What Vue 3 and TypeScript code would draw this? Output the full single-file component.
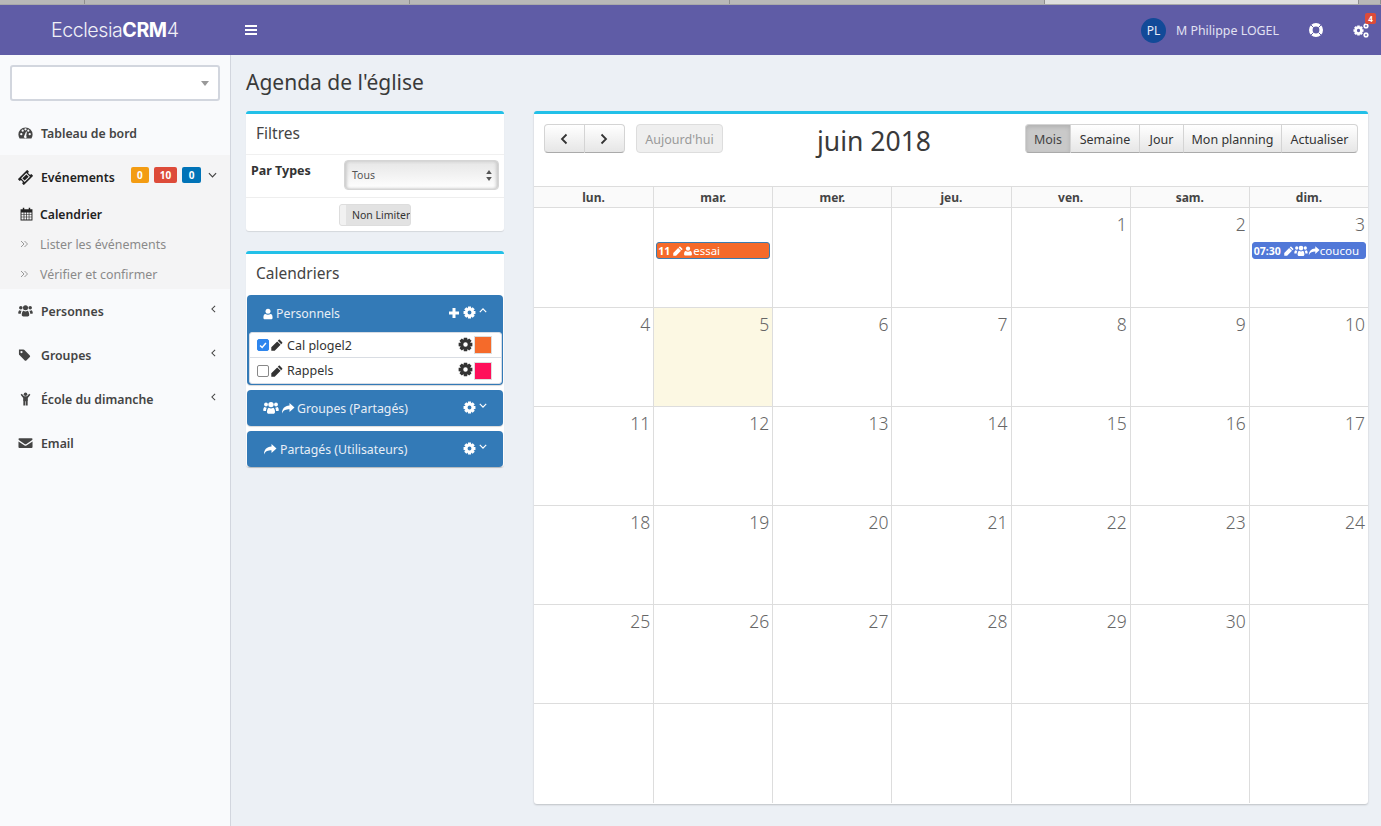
<template>
  <div class="page">
    <div class="tabstrip">
      <div v-for="t in tabs" :key="t" class="tab" :class="{ on: t === 314 }" :style="{ width: t + 'px' }"></div>
    </div>
    <header class="topbar">
      <div class="logo">Ecclesia<b>CRM</b>4</div>
      <svg class="burger" viewBox="0 0 12 10"><path d="M0 0h12v2H0zM0 4h12v2H0zM0 8h12v2H0z" fill="#fff" /></svg>
      <div class="top-right">
        <span class="avatar">PL</span>
        <span class="username">M Philippe LOGEL</span>
        <svg class="lifering" viewBox="0 0 16 16">
          <circle cx="8" cy="8" r="5.200" fill="none" stroke="#fff" stroke-width="3.600" />
          <path d="M2.700 2.700l2.800 2.800M13.300 2.700l-2.800 2.800M2.700 13.300l2.800-2.800M13.300 13.300l-2.800-2.800" stroke="#5f5ca6" stroke-width="1" />
        </svg>
        <span class="cogs">
          <svg viewBox="0 0 16 16" width="16" height="16" fill="#fff">
            <svg x="0" y="3" width="11" height="11" viewBox="0 0 14 14"><path :d="gear" fill-rule="evenodd" /></svg>
            <svg x="10" y="1" width="6" height="6" viewBox="0 0 14 14"><path :d="gear" fill-rule="evenodd" /></svg>
            <svg x="10" y="10" width="6" height="6" viewBox="0 0 14 14"><path :d="gear" fill-rule="evenodd" /></svg>
          </svg>
          <em class="cog-badge">4</em>
        </span>
      </div>
    </header>
    <div class="main">
      <aside class="sidebar">
        <div class="search"><i class="caret"></i></div>
        <nav class="menu">
          <a class="item first">
            <svg class="ic" viewBox="0 0 16 14"><path fill-rule="evenodd" d="M8 1a7.6 7.6 0 0 0-7.6 7.6c0 1.6.5 3 1.300 4.300h12.600c.8-1.300 1.300-2.700 1.300-4.300A7.600 7.600 0 0 0 8 1zM3.500 9.500a1.200 1.200 0 1 1 0-2.400 1.200 1.200 0 0 1 0 2.400zM5 5.700a1.200 1.200 0 1 1 0-2.400 1.200 1.200 0 0 1 0 2.400zM8 4.200A1.200 1.200 0 1 1 8 1.800a1.200 1.200 0 0 1 0 2.400zM9.300 11a1.500 1.500 0 1 1-2.700-.9l2-4.800.9.300-.8 4.900c.4.100.6.300.6.500zM11 5.700a1.200 1.200 0 1 1 0-2.400 1.200 1.200 0 0 1 0 2.400zM12.500 9.500a1.200 1.200 0 1 1 0-2.400 1.200 1.200 0 0 1 0 2.400z" /></svg>
            <span>Tableau de bord</span>
          </a>
          <div class="open-group">
            <a class="item open">
              <svg class="ic ticket" viewBox="0 0 16 16">
                <g transform="rotate(-45 8 8)">
                  <path fill-rule="evenodd" d="M1 3.500h14v2.600a1.900 1.900 0 0 0 0 3.800v2.600H1V9.900a1.900 1.900 0 0 0 0-3.800zM4 5.300v5.400h8V5.300z" />
                  <path d="M5 6.300h6v3.400H5z" />
                </g>
              </svg>
              <span>Evénements</span>
              <span class="badges">
                <em class="amber">0</em><em class="red">10</em><em class="blue">0</em>
              </span>
              <svg class="chev down" viewBox="0 0 10 6"><path d="M1 1l4 4 4-4" /></svg>
            </a>
            <a class="sub active">
              <svg class="cal" viewBox="0 0 14 15"><path fill-rule="evenodd" d="M.6 2.500H3V.8h1.600v1.700h4.800V.8H11v1.700h2.400v12H.6zM1.600 5.800v1.900h2.300V5.800zm3.100 0v1.900h2v-1.900zm2.700 0v1.900h2v-1.900zm2.700 0v1.900h2.300V5.800zM1.600 8.400v2h2.300v-2zm3.100 0v2h2v-2zm2.700 0v2h2v-2zm2.700 0v2h2.300v-2zM1.600 11.100v2.400h2.300v-2.400zm3.100 0v2.400h2v-2.400zm2.700 0v2.400h2v-2.400zm2.700 0v2.400h2.300v-2.400z" /></svg>
              <span>Calendrier</span>
            </a>
            <a v-for="s in subItems" :key="s" class="sub">
              <svg class="dbl" viewBox="0 0 9 8"><path d="M1 1l3 3-3 3M4.500 1l3 3-3 3" /></svg>
              <span>{{ s }}</span>
            </a>
          </div>
          <a class="item">
            <svg class="ic" viewBox="0 0 16 14"><circle cx="3" cy="3.500" r="1.900" /><circle cx="13" cy="3.500" r="1.900" /><circle cx="8" cy="3.600" r="2.700" /><path d="M.2 9.500c0-2 .7-3.400 1.600-3.400.6.500 1.300.8 2 .7-.6 1-.8 2-.8 3.200H1c-.5 0-.8-.2-.8-.5zM15.800 9.500c0-2-.7-3.400-1.600-3.400-.6.500-1.300.8-2 .7.600 1 .8 2 .8 3.200H15c.5 0 .8-.2.800-.5zM4 11c0-2.300 1-4.200 2-4.200 1.200 1 2.800 1 4 0 1 0 2 1.900 2 4.200 0 1-.7 1.800-1.700 1.800H5.700C4.700 12.800 4 12 4 11z" /></svg>
            <span>Personnes</span>
            <svg class="chev left" viewBox="0 0 6 10"><path d="M5 1L1 5l4 4" /></svg>
          </a>
          <a class="item">
            <svg class="ic" viewBox="0 0 16 14"><path fill-rule="evenodd" d="M1 1.200h4.700c.5 0 .9.200 1.200.5l5.700 5.700c.5.500.5 1.200 0 1.700l-3.700 3.700c-.5.500-1.200.5-1.700 0L1.500 7.100C1.200 6.800 1 6.400 1 5.900zM3.700 5a1.200 1.200 0 1 0 0-2.400 1.200 1.200 0 0 0 0 2.400z" /></svg>
            <span>Groupes</span>
            <svg class="chev left" viewBox="0 0 6 10"><path d="M5 1L1 5l4 4" /></svg>
          </a>
          <a class="item">
            <svg class="ic" viewBox="0 0 16 14"><circle cx="8" cy="2" r="1.900" /><path d="M2.800 2.400l1.200-.9L6.500 4h3L12 1.500l1.200.9L10.500 6v3H10.300V14H8.300V9.400h-.6V14H5.700V9H5.500V6z" /></svg>
            <span>École du dimanche</span>
            <svg class="chev left" viewBox="0 0 6 10"><path d="M5 1L1 5l4 4" /></svg>
          </a>
          <a class="item">
            <svg class="ic" viewBox="0 0 16 14"><path d="M1.500 1.800h13c.6 0 1 .4 1 1 0 .5-.3.900-.7 1.200L8.600 8.200c-.4.300-.8.300-1.200 0L1.200 4C.800 3.700.5 3.300.5 2.800c0-.6.400-1 1-1zM.5 5.300l6.500 4.300c.6.400 1.400.4 2 0l6.500-4.300V11.200c0 .6-.4 1-1 1h-13c-.6 0-1-.4-1-1z" /></svg>
            <span>Email</span>
          </a>
        </nav>
      </aside>
      <main class="content">
        <h1 class="title">Agenda de l'église</h1>
        <div class="columns">
          <div class="left-col">
            <section class="box filters">
              <h3 class="box-title">Filtres</h3>
              <div class="filter-row">
                <label>Par Types</label>
                <div class="select">
                  <span>Tous</span>
                  <svg viewBox="0 0 6 11" width="6" height="11"><path d="M3 0l2.800 4H.2zM3 11L.2 7h5.600z" fill="#555" /></svg>
                </div>
              </div>
              <div class="toggle-row">
                <div class="toggle"><i></i><span>Non Limiter</span></div>
              </div>
            </section>
            <section class="box cals">
              <h3 class="box-title">Calendriers</h3>
              <div class="panel personal">
                <div class="panel-head">
                  <span class="panel-name">
                    <svg class="pi" viewBox="0 0 12 14"><circle cx="6" cy="3.700" r="3" /><path d="M.5 11.400c0-2.500.7-4.500 2.400-4.500 1.600 1.300 4.600 1.300 6.200 0 1.700 0 2.400 2 2.400 4.500 0 1.200-.8 2-2 2h-7c-1.200 0-2-.8-2-2z" /></svg>
                    Personnels
                  </span>
                  <span class="panel-tools">
                    <svg viewBox="0 0 12 12" width="12" height="12"><path d="M4.500 1h3v3.500H11v3H7.500V11h-3V7.500H1v-3h3.500z" fill="#fff" /></svg>
                    <svg class="gear" viewBox="0 0 14 14"><path :d="gear" fill-rule="evenodd" /></svg>
                    <svg class="tiny" viewBox="0 0 10 6"><path d="M1 5l4-4 4 4" /></svg>
                  </span>
                </div>
                <div class="cal-list">
                  <div v-for="c in personal" :key="c.name" class="cal-row">
                    <span class="check" :class="{ checked: c.on }">
                      <svg v-if="c.on" viewBox="0 0 12 12"><path d="M2.500 6.500l2.500 2.500 4.500-5.500" /></svg>
                    </span>
                    <svg class="pencil" viewBox="0 0 12 12"><path d="M8.800.8l2.400 2.400c.3.300.3.700 0 1L10.200 5.200 6.800 1.800 7.800.8c.3-.3.700-.3 1 0zM6.200 2.400l3.400 3.400L3.700 11.700.3 11.700.3 8.300z" /></svg>
                    <span class="cal-name">{{ c.name }}</span>
                    <svg class="row-gear" viewBox="0 0 14 14"><path :d="gear" fill-rule="evenodd" /></svg>
                    <span class="swatch" :style="{ background: c.color }"></span>
                  </div>
                </div>
              </div>
              <div class="panel">
                <div class="panel-head short">
                  <span class="panel-name">
                    <svg class="pg" viewBox="0 0 16 14"><circle cx="3" cy="3.500" r="1.900" /><circle cx="13" cy="3.500" r="1.900" /><circle cx="8" cy="3.600" r="2.700" /><path d="M.2 9.500c0-2 .7-3.400 1.600-3.400.6.500 1.300.8 2 .7-.6 1-.8 2-.8 3.200H1c-.5 0-.8-.2-.8-.5zM15.800 9.500c0-2-.7-3.400-1.600-3.400-.6.500-1.300.8-2 .7.600 1 .8 2 .8 3.200H15c.5 0 .8-.2.800-.5zM4 11c0-2.300 1-4.200 2-4.200 1.200 1 2.800 1 4 0 1 0 2 1.900 2 4.200 0 1-.7 1.800-1.700 1.800H5.700C4.700 12.800 4 12 4 11z" /></svg>
                    <svg class="ps" viewBox="0 0 14 12"><path :d="share" /></svg>
                    Groupes (Partagés)
                  </span>
                  <span class="panel-tools">
                    <svg class="gear" viewBox="0 0 14 14"><path :d="gear" fill-rule="evenodd" /></svg>
                    <svg class="tiny" viewBox="0 0 10 6"><path d="M1 1l4 4 4-4" /></svg>
                  </span>
                </div>
              </div>
              <div class="panel">
                <div class="panel-head short">
                  <span class="panel-name">
                    <svg class="ps" viewBox="0 0 14 12"><path :d="share" /></svg>
                    Partagés (Utilisateurs)
                  </span>
                  <span class="panel-tools">
                    <svg class="gear" viewBox="0 0 14 14"><path :d="gear" fill-rule="evenodd" /></svg>
                    <svg class="tiny" viewBox="0 0 10 6"><path d="M1 1l4 4 4-4" /></svg>
                  </span>
                </div>
              </div>
            </section>
          </div>
          <section class="box calendar">
            <div class="toolbar">
              <div class="tb-left">
                <div class="btn-group">
                  <button class="btn nav"><svg viewBox="0 0 8 12" width="8" height="12"><path d="M6.500 1.500L2 6l4.500 4.500" /></svg></button>
                  <button class="btn nav"><svg viewBox="0 0 8 12" width="8" height="12"><path d="M1.500 1.500L6 6l-4.500 4.500" /></svg></button>
                </div>
                <button class="btn today">Aujourd'hui</button>
              </div>
              <h2 class="month">juin 2018</h2>
              <div class="btn-group views">
                <button v-for="v in views" :key="v.label" class="btn" :class="{ pressed: v.label === 'Mois' }" :style="{ width: v.width + 'px' }">{{ v.label }}</button>
              </div>
            </div>
            <div class="grid-head">
              <div v-for="d in days" :key="d" class="dow">{{ d }}</div>
            </div>
            <div class="grid">
              <div v-for="(c, i) in cells" :key="i" class="cell" :class="{ today: c === 5 }">
                <span class="num">{{ c }}</span>
                <div v-if="c === 3 || i === 1" class="event" :class="c === 3 ? 'ev-blue' : 'ev-orange'">
                  <b>{{ c === 3 ? '07:30' : '11' }}</b>
                  <svg class="ev-ic" viewBox="0 0 12 12"><path d="M8.800.8l2.400 2.400c.3.300.3.700 0 1L10.200 5.200 6.800 1.800 7.800.8c.3-.3.700-.3 1 0zM6.200 2.400l3.400 3.400L3.700 11.700.3 11.700.3 8.300z" /></svg>
                  <template v-if="c === 3">
                    <svg class="ev-ic wide" viewBox="0 0 16 14"><circle cx="3" cy="3.500" r="1.900" /><circle cx="13" cy="3.500" r="1.900" /><circle cx="8" cy="3.600" r="2.700" /><path d="M.2 9.500c0-2 .7-3.400 1.600-3.400.6.500 1.300.8 2 .7-.6 1-.8 2-.8 3.200H1c-.5 0-.8-.2-.8-.5zM15.800 9.500c0-2-.7-3.400-1.600-3.400-.6.500-1.300.8-2 .7.600 1 .8 2 .8 3.200H15c.5 0 .8-.2.800-.5zM4 11c0-2.300 1-4.200 2-4.200 1.200 1 2.800 1 4 0 1 0 2 1.900 2 4.200 0 1-.7 1.800-1.700 1.800H5.700C4.700 12.800 4 12 4 11z" /></svg>
                    <svg class="ev-ic wide2" viewBox="0 0 14 12"><path :d="share" /></svg>
                    <span>coucou</span>
                  </template>
                  <template v-else>
                    <svg class="ev-ic" viewBox="0 0 12 14"><circle cx="6" cy="3.700" r="3" /><path d="M.5 11.400c0-2.500.7-4.500 2.400-4.500 1.600 1.300 4.600 1.300 6.200 0 1.700 0 2.400 2 2.400 4.500 0 1.200-.8 2-2 2h-7c-1.200 0-2-.8-2-2z" /></svg>
                    <span>essai</span>
                  </template>
                </div>
              </div>
            </div>
          </section>
        </div>
      </main>
    </div>
  </div>
</template>

<script setup lang="ts">
const tabs = [85, 325, 320, 315, 314, 22]

const subItems = ['Lister les événements', 'Vérifier et confirmer']
const views = [
  { label: 'Mois', width: 46 },
  { label: 'Semaine', width: 69 },
  { label: 'Jour', width: 44 },
  { label: 'Mon planning', width: 98 },
  { label: 'Actualiser', width: 76 },
]
const days = ['lun.', 'mar.', 'mer.', 'jeu.', 'ven.', 'sam.', 'dim.']

const personal = [
  { name: 'Cal plogel2', on: true, color: '#f56a2a' },
  { name: 'Rappels', on: false, color: '#ff0f5a' },
]

// June 2018 starts on a Friday, 6 weeks shown
const cells: (number | null)[] = [null, null, null, null]
for (let d = 1; d <= 30; d++) cells.push(d)
while (cells.length < 42) cells.push(null)

const share = 'M8.500 1L13.500 5.500 8.500 10V7.300C5 7.300 2.500 8 1 11.500 1 7 3.500 3.800 8.500 3.600z'

// gear outline built from 8 teeth
const gear = (() => {
  const pts: string[] = []
  for (let i = 0; i < 8; i++) {
    const a = (i * Math.PI) / 4
    const w = 0.3
    const p = [
      [a - w - 0.12, 4.6],
      [a - w + 0.06, 6.6],
      [a + w - 0.06, 6.6],
      [a + w + 0.12, 4.6],
    ]
    for (const [t, r] of p) {
      pts.push(`${(7 + r * Math.cos(t)).toFixed(2)} ${(7 + r * Math.sin(t)).toFixed(2)}`)
    }
  }
  return `M${pts.join('L')}ZM7 4.900a2.100 2.100 0 1 0 0 4.200 2.100 2.100 0 0 0 0-4.200z`
})()
</script>

<style>
html, body {
  margin: 0;
  background: #ecf0f5;
}
</style>

<style scoped>
.page {
  width: 1381px;
  height: 826px;
  overflow: hidden;
  display: flex;
  flex-direction: column;
  background: #ecf0f5;
  font-family: "Noto Sans", "Open Sans", sans-serif;
  font-size: 13px;
  color: #333;
}
.tabstrip {
  height: 5px;
  display: flex;
  background: #a9a9a9;
}
.tab {
  height: 4px;
  box-sizing: border-box;
  border-right: 1px solid #8e8e8e;
  background: #b8b8b8;
}
.tab.on {
  background: #dedede;
}
.topbar {
  height: 50px;
  background: #5f5ca6;
  display: flex;
  align-items: center;
  color: #fff;
  position: relative;
}
.logo {
  width: 245px;
  box-sizing: border-box;
  padding-left: 51px;
  font-family: Inter, "Liberation Sans", sans-serif;
  font-size: 19.600px;
  letter-spacing: -0.45px;
  font-weight: 300;
  color: #f0f0f6;
}
.logo b {
  font-weight: 700;
  color: #fff;
}
.burger {
  width: 12px;
  height: 10px;
}
.top-right {
  margin-left: auto;
  display: flex;
  align-items: center;
}
.avatar {
  width: 25px;
  height: 25px;
  border-radius: 50%;
  background: #124a98;
  font-size: 12px;
  line-height: 25px;
  text-align: center;
  color: #e8ecf8;
}
.username {
  margin-left: 10px;
  font-size: 12.400px;
  width: 125px;
  color: #e2e2f2;
}
.lifering {
  width: 16px;
  height: 16px;
  margin-left: 7px;
}
.cogs {
  position: relative;
  margin-left: 29px;
  margin-right: 12px;
  width: 16px;
  height: 16px;
}
.cog-badge {
  position: absolute;
  top: -9px;
  left: 12px;
  width: 11px;
  height: 11px;
  border-radius: 2px;
  background: #dd4b39;
  color: #fff;
  font-style: normal;
  font-weight: 700;
  font-size: 8px;
  line-height: 11px;
  text-align: center;
}
.main {
  flex: 1;
  display: flex;
  min-height: 0;
}
.sidebar {
  width: 231px;
  box-sizing: border-box;
  background: #f9fafc;
  border-right: 1px solid #d2d6de;
  padding-top: 10px;
}
.search {
  height: 36px;
  margin: 0 10px 0 10px;
  box-sizing: border-box;
  background: #fff;
  border: 2px solid #d2d6de;
  border-radius: 3px;
  position: relative;
}
.caret {
  position: absolute;
  right: 9px;
  top: 14px;
  border-left: 4px solid transparent;
  border-right: 4px solid transparent;
  border-top: 5px solid #999;
}
.menu {
  margin-top: 10px;
  display: flex;
  flex-direction: column;
}
.item {
  display: flex;
  align-items: center;
  height: 44px;
  padding: 0 13px 0 18px;
  font-weight: 600;
  font-size: 12.300px;
  color: #444;
  position: relative;
}
.item > span:first-of-type {
  margin-left: 8px;
}
.item.open {
  color: #222;
}
.ic {
  width: 15px;
  height: 14px;
  fill: #444;
  flex: none;
}
.open .ic {
  fill: #222;
}
.ic.ticket {
  height: 15px;
}
.open-group {
  background: #f4f4f5;
  height: 134px;
}
.badges {
  display: flex;
  gap: 5px;
  margin-left: auto;
  margin-top: -4px;
}
.badges em {
  font-style: normal;
  font-size: 10px;
  font-weight: 700;
  color: #fff;
  height: 16px;
  line-height: 16px;
  border-radius: 2px;
  text-align: center;
  padding: 0 6px;
}
.badges .blue {
  padding: 0 6.500px;
}
.amber { background: #f39c12; }
.red { background: #dd4b39; }
.blue { background: #0073b7; }
.chev {
  fill: none;
  stroke: #444;
  stroke-width: 1.300;
}
.chev.down {
  width: 9px;
  height: 6px;
  margin-left: 7px;
  margin-top: -4px;
}
.chev.left {
  width: 5px;
  height: 8px;
  margin-left: auto;
  margin-top: -4px;
  position: relative;
  left: -1px;
}
.sub {
  display: flex;
  align-items: center;
  height: 30px;
  padding-left: 20px;
  font-size: 12.400px;
  color: #8a8a8a;
}
.sub.active {
  font-size: 12.200px;
  font-weight: 600;
  color: #222;
}
.cal {
  width: 13px;
  height: 14px;
  fill: #222;
}
.dbl {
  width: 9px;
  height: 8px;
  fill: none;
  stroke: #999;
  stroke-width: 1;
  margin-right: 2px;
}
.sub span {
  margin-left: 7px;
}
.sub .dbl + span {
  margin-left: 9px;
}
.content {
  flex: 1;
  padding: 0 13px 0 15px;
  min-width: 0;
}
.title {
  margin: 14px 0 0;
  height: 42px;
  font-size: 21px;
  font-weight: 400;
  line-height: 27px;
  color: #3a3a3a;
}
.columns {
  display: flex;
  align-items: flex-start;
  gap: 30px;
}
.left-col {
  width: 258px;
  flex: none;
  display: flex;
  flex-direction: column;
  gap: 20px;
}
.box {
  background: #fff;
  border-top: 3px solid #22c0e8;
  border-radius: 3px;
  box-shadow: 0 1px 1px rgba(0, 0, 0, 0.1);
}
.box-title {
  margin: 0;
  font-size: 15.500px;
  font-weight: 400;
  color: #444;
  line-height: 20px;
  padding: 9px 10px 11px;
}
.filters .box-title {
  border-bottom: 1px solid #f0f0f0;
}
.filter-row {
  display: flex;
  height: 43px;
  box-sizing: border-box;
  padding: 5px 5px 0;
  justify-content: space-between;
  border-bottom: 1px solid #eee;
}
.filter-row label {
  font-size: 12.500px;
  font-weight: 700;
  line-height: 22px;
}
.select {
  width: 155px;
  height: 30px;
  box-sizing: border-box;
  border: 1px solid #d5d5d5;
  border-radius: 4px;
  background: linear-gradient(#e6e6e6, #fff);
  box-shadow: inset 2px 0 3px #ccc, inset -2px 0 3px #ccc;
  display: flex;
  align-items: center;
  justify-content: space-between;
  padding: 0 6px 0 7px;
  font-size: 10.500px;
  color: #555;
}
.toggle-row {
  height: 33px;
  display: flex;
  justify-content: center;
  align-items: center;
}
.toggle {
  width: 72px;
  height: 22px;
  box-sizing: border-box;
  border: 1px solid #ddd;
  border-radius: 3px;
  background: #e2e2e2;
  display: flex;
  align-items: center;
  overflow: hidden;
  white-space: nowrap;
  font-size: 10.500px;
}
.toggle i {
  width: 6px;
  height: 100%;
  margin-right: 6px;
  background: #f1f1f1;
  flex: none;
}
.cals .box-title {
  padding-bottom: 12px;
}
.panel {
  margin: 0 1px 5px;
  background: #337ab7;
  border-radius: 4px;
  box-shadow: 0 1px 1px rgba(0, 0, 0, 0.15);
}
.panel:last-child {
  margin-bottom: 0;
}
.panel.personal {
  padding-bottom: 1px;
}
.panel-head {
  display: flex;
  align-items: center;
  justify-content: space-between;
  height: 37px;
  padding: 0 16px;
  color: #e8eef6;
  font-size: 12.300px;
}
.panel-name {
  display: flex;
  align-items: center;
  gap: 2px;
}
.panel-tools {
  display: flex;
  align-items: center;
  gap: 3px;
  margin-top: -2px;
}
.pi {
  width: 10px;
  height: 12px;
  fill: #fff;
  margin-right: 1px;
}
.pg {
  width: 16px;
  height: 14px;
  fill: #fff;
}
.ps {
  width: 14px;
  height: 12px;
  fill: #fff;
}
.ps:first-child {
  margin-right: 1px;
}
.gear {
  width: 13px;
  height: 13px;
  fill: #fff;
}
.tiny {
  width: 8px;
  height: 5px;
  fill: none;
  stroke: #fff;
  stroke-width: 1.500;
  margin-top: -4px;
}
.cal-list {
  margin: 0 1px 0 2px;
  background: #fff;
  border: 1px solid #d7dce4;
  border-radius: 3px;
}
.cal-row {
  height: 25px;
  box-sizing: border-box;
  display: flex;
  align-items: center;
  padding: 0 9px 0 7px;
  font-size: 12.500px;
  color: #333;
}
.cal-row:first-child {
  border-bottom: 1px solid #d9dde3;
}
.check {
  width: 12px;
  height: 12px;
  box-sizing: border-box;
  border: 1px solid #888;
  border-radius: 2px;
  background: #fff;
  flex: none;
}
.check.checked {
  background: #2e86ee;
  border-color: #2e86ee;
}
.check svg {
  display: block;
  fill: none;
  stroke: #fff;
  stroke-width: 1.800;
}
.pencil {
  width: 12px;
  height: 12px;
  margin: 0 4px 0 2px;
  fill: #333;
}
.cal-name {
  flex: 1;
}
.row-gear {
  width: 15px;
  height: 15px;
  fill: #333;
  margin-top: -2px;
}
.swatch {
  width: 16px;
  height: 16px;
  border: 1px solid #ddd;
  outline: 1px solid #fff;
  margin-left: 1px;
}
.panel-head.short {
  height: 36px;
}
.calendar {
  flex: none;
  width: 834px;
  height: 690px;
  position: relative;
  box-shadow: 0 1px 2px rgba(0, 0, 0, 0.2);
}
.toolbar {
  display: flex;
  justify-content: space-between;
  align-items: flex-start;
  padding: 10px 10px 0;
  height: 62px;
}
.tb-left {
  display: flex;
  gap: 11px;
}
.btn-group {
  display: inline-flex;
}
.btn {
  height: 29px;
  box-sizing: border-box;
  border: 1px solid #d4d4d4;
  border-left: 0;
  border-bottom-color: #aaa;
  background: linear-gradient(#fff, #e6e6e6);
  color: #333;
  font-family: inherit;
  font-size: 12.500px;
  padding: 1px 0 0;
  cursor: pointer;
}
.btn:first-child {
  border-left: 1px solid #d4d4d4;
  border-radius: 4px 0 0 4px;
}
.btn:last-child {
  border-radius: 0 4px 4px 0;
}
.btn.nav {
  width: 40.500px;
  padding: 0;
}
.btn.nav svg {
  display: block;
  margin: 0 auto;
  fill: none;
  stroke: #333;
  stroke-width: 1.800;
}
.btn.today {
  width: 87px;
  border: 1px solid #ddd;
  border-radius: 4px;
  background: #efefef;
  color: #999;
}
.btn.pressed {
  background: #c9c9c9;
  color: #444;
  box-shadow: inset 0 2px 4px rgba(0, 0, 0, 0.12);
}
.month {
  margin: -1px 0 0;
  font-size: 26.500px;
  font-weight: 400;
  line-height: 36px;
  color: #3a3a3a;
}
.grid-head {
  display: grid;
  grid-template-columns: repeat(7, 1fr);
  height: 22px;
  box-sizing: border-box;
  border-top: 1px solid #ddd;
  border-bottom: 1px solid #ddd;
  background: #fafafa;
}
.dow {
  text-align: center;
  font-size: 12px;
  font-weight: 700;
  line-height: 21px;
  color: #444;
}
.dow + .dow {
  border-left: 1px solid #ddd;
}
.grid {
  display: grid;
  grid-template-columns: repeat(7, 1fr);
  grid-template-rows: 100px repeat(5, 99px);
}
.cell {
  border-bottom: 1px solid #ddd;
  position: relative;
  box-sizing: border-box;
  text-align: right;
  padding: 4px 2px 0 2px;
}
.cell:not(:nth-child(7n + 1)) {
  border-left: 1px solid #ddd;
}
.cell:nth-last-child(-n + 7) {
  border-bottom: 0;
}
.cell.today {
  background: #fcf8e3;
}
.num {
  display: block;
  height: 24px;
  padding-right: 1px;
  font-size: 17.500px;
  font-weight: 300;
  line-height: 24px;
  color: #666;
}
.event {
  display: flex;
  align-items: center;
  height: 17px;
  margin-top: 6px;
  padding: 0 1px;
  box-sizing: border-box;
  border-radius: 3px;
  text-align: left;
  font-size: 11.500px;
  color: #fff;
  white-space: nowrap;
}
.event b {
  font-size: 10.500px;
  font-weight: 700;
  margin-right: 3px;
}
.ev-orange {
  background: #f56a2a;
  border: 1px solid #3a7cb0;
}
.ev-blue {
  background: #5178d8;
  border: 1px solid #5178d8;
}
.ev-ic {
  width: 10px;
  height: 10px;
  fill: #fff;
  flex: none;
}
.ev-ic.wide {
  width: 14px;
  height: 12px;
}
.ev-ic.wide2 {
  width: 12px;
  height: 11px;
}
</style>
